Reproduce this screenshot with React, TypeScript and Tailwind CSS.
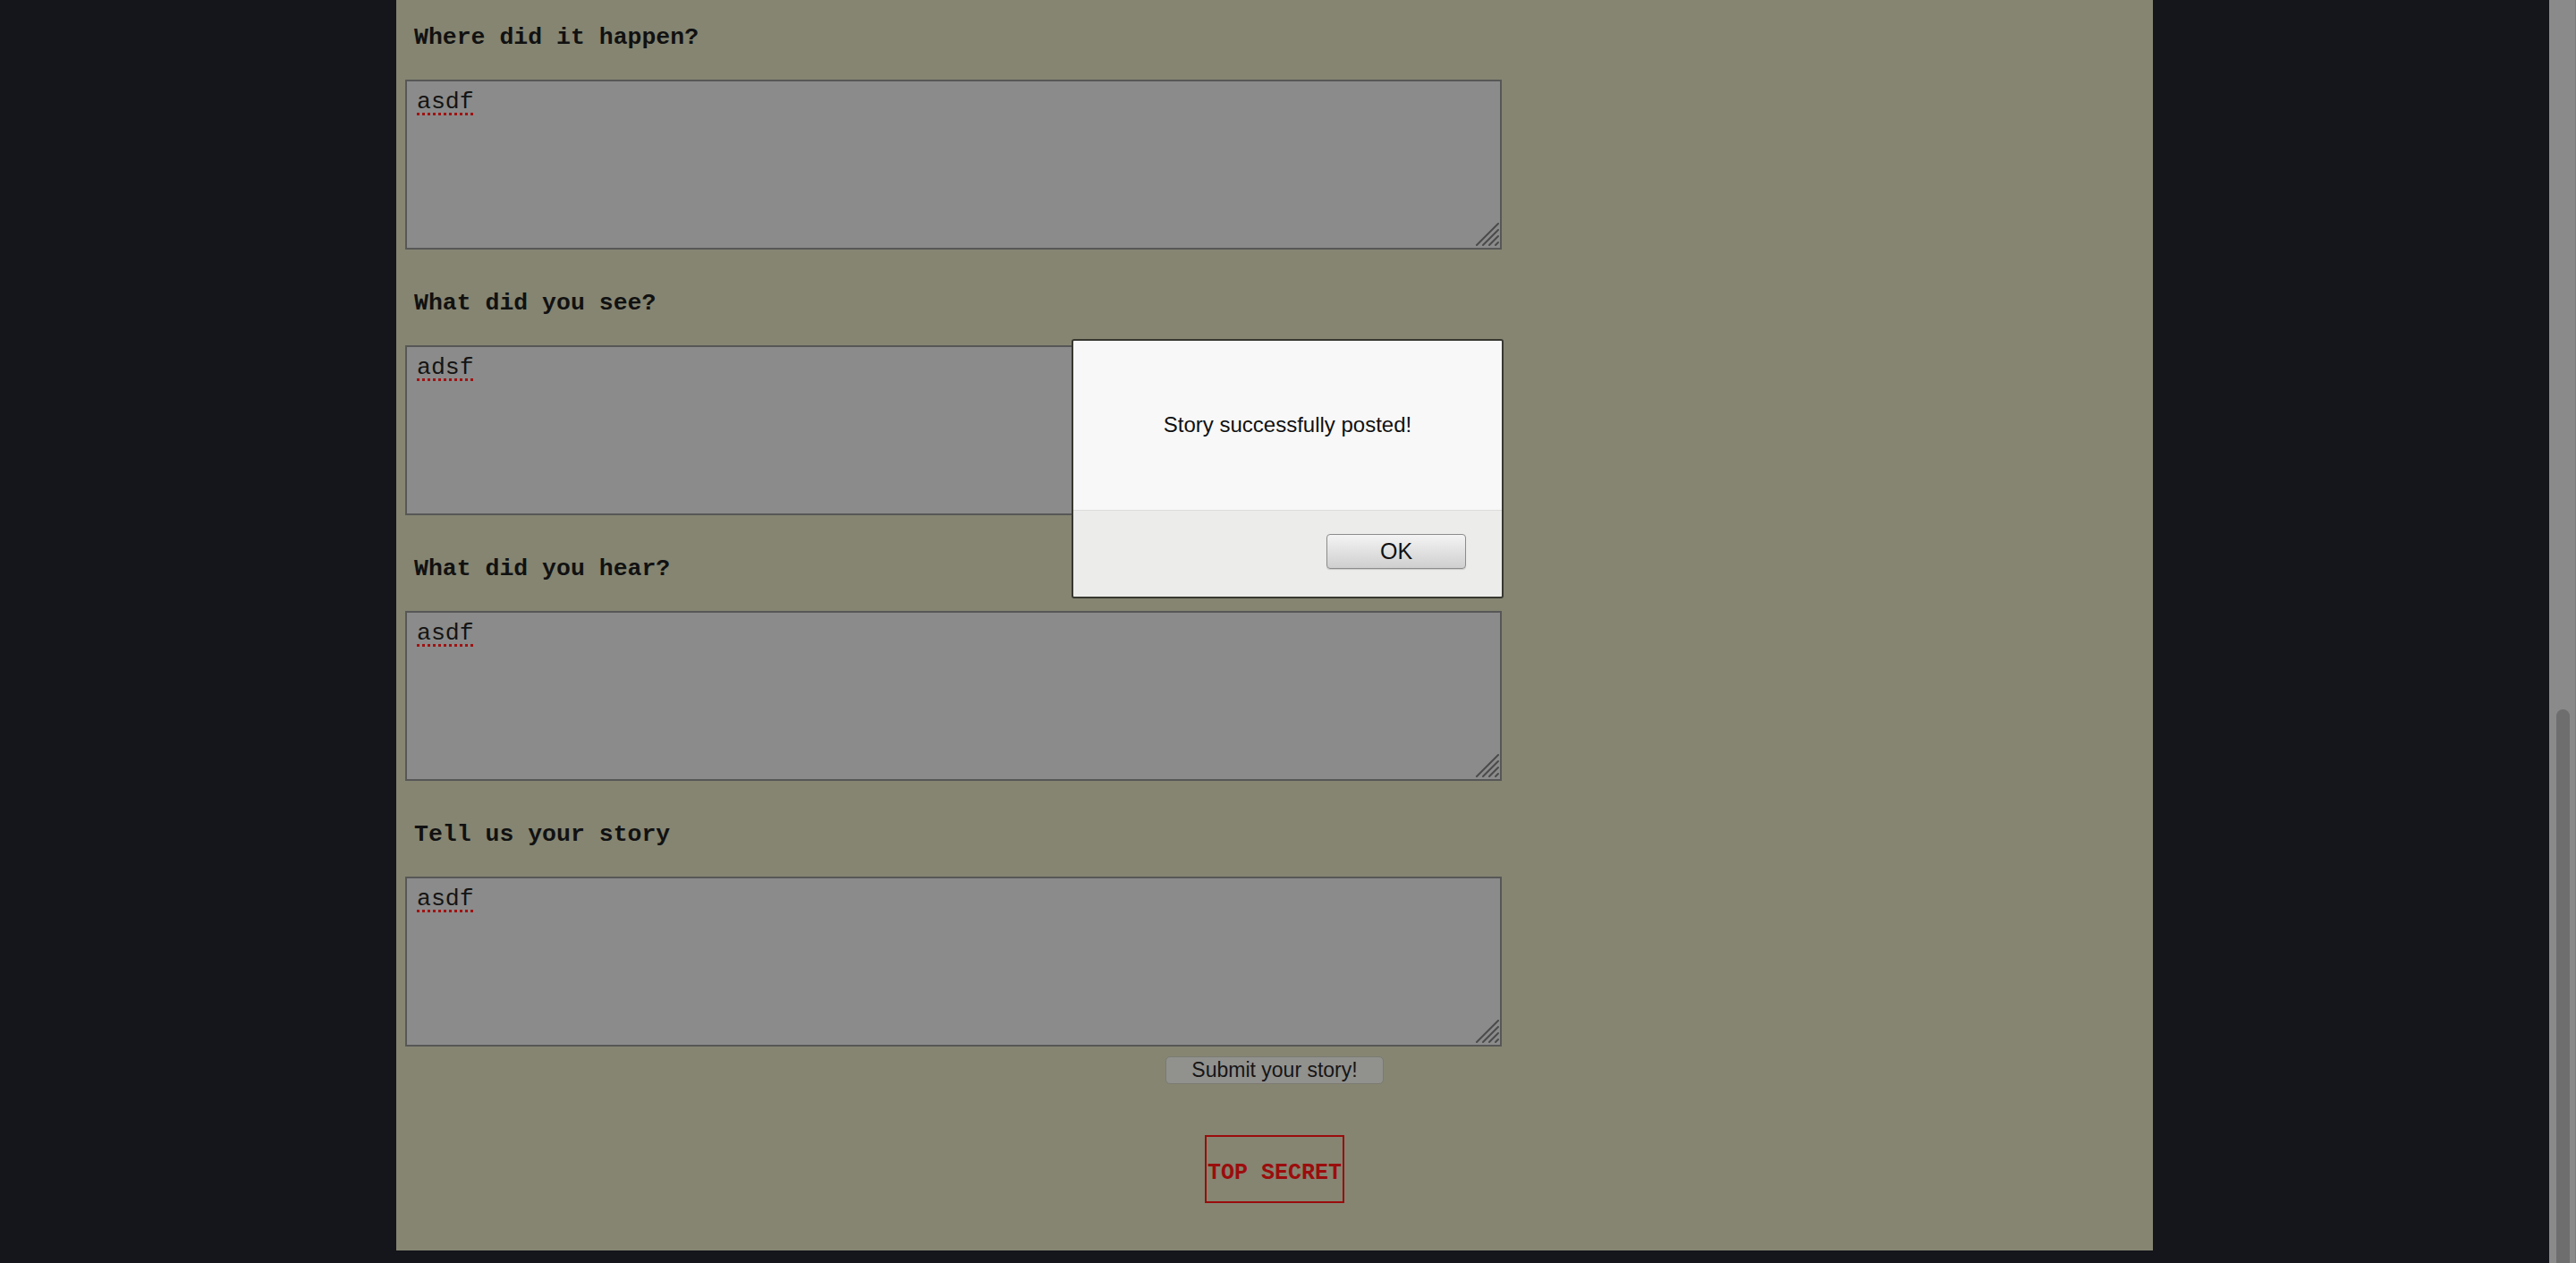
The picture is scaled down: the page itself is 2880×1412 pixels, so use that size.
const QUESTIONS = [
  { label: 'Where did it happen?', answer: 'asdf' },
  { label: 'What did you see?', answer: 'adsf' },
  { label: 'What did you hear?', answer: 'asdf' },
  { label: 'Tell us your story', answer: 'asdf' },
]

function ResizeGrip() {
  return (
    <svg className="absolute right-0 bottom-0" width="28" height="28" viewBox="0 0 28 28">
      <g stroke="#4a4a4a" strokeWidth="2" strokeLinecap="round">
        <line x1="2" y1="25" x2="26" y2="1" />
        <line x1="9" y1="25" x2="26" y2="8" />
        <line x1="16" y1="25" x2="26" y2="15" />
        <line x1="23" y1="25" x2="26" y2="22" />
      </g>
    </svg>
  )
}

function StoryField({ label, answer, first }: { label: string; answer: string; first: boolean }) {
  return (
    <div className="flex flex-col">
      <div className={(first ? 'h-[89px]' : 'h-[107px]') + ' flex flex-col justify-end pb-[31px] pl-[10px]'}>
        <h3 className="text-[26.5px] leading-[32px] font-bold text-[#111111] font-['Liberation_Mono',monospace]">
          {label}
        </h3>
      </div>
      {/* fake textarea so the spellcheck underline can be drawn */}
      <div className="relative w-[1226px] h-[190px] border-2 border-[#575757] bg-[#8b8b8b] pt-[8px] pl-[11px]">
        <span className="text-[26.5px] leading-[30px] text-[#141414] font-['Liberation_Mono',monospace] underline decoration-dotted decoration-[#a01212] decoration-[3px] underline-offset-[5px]">
          {answer}
        </span>
        <ResizeGrip />
      </div>
    </div>
  )
}

export default function App() {
  return (
    <div className="relative w-full h-[1412px] overflow-hidden flex bg-[#15161b]">
      {/* ── Page ── */}
      <div className="flex-1 pl-[443px]">
        <main className="w-[1964px] h-[1398px] bg-[#858572] flex flex-col">
          <div className="pl-[10px]">
            {QUESTIONS.map((q, i) => (
              <StoryField key={i} label={q.label} answer={q.answer} first={i === 0} />
            ))}
          </div>

          <div className="flex justify-center pt-[11px]">
            <button className="w-[244px] h-[31px] rounded-[5px] border border-[#7a7a72] bg-[#91918e] text-[23px] leading-none text-[#161616] font-['Liberation_Sans',Arial,sans-serif]">
              Submit your story!
            </button>
          </div>

          <div className="flex justify-center pt-[57px]">
            <div className="w-[156px] h-[76px] border-2 border-[#9a0c0c] flex items-center justify-center pt-[10px]">
              <span className="whitespace-nowrap text-[25px] font-bold text-[#9b0d0d] font-['Liberation_Mono',monospace]">
                TOP SECRET
              </span>
            </div>
          </div>
        </main>
      </div>

      {/* ── Scrollbar ── */}
      <div className="w-[30px] h-full bg-[#8a8a8a] flex flex-col pt-[793px] pl-[8px] pr-[6px] border-r border-[#7c7c7c]">
        <div className="flex-1 rounded-t-full bg-[#6e6e6e]" />
      </div>

      {/* ── Alert dialog ── */}
      <div className="absolute left-[1198px] top-[379px] w-[483px] h-[290px] flex flex-col rounded-[3px] border-2 border-[#383830] overflow-hidden font-['Liberation_Sans',Arial,sans-serif]">
        <div className="h-[190px] bg-[#f8f8f8] flex items-center justify-center border-b border-[#dcdcdc]">
          <p className="text-[24px] text-[#111111] pb-[2px]">Story successfully posted!</p>
        </div>
        <div className="flex-1 bg-[#ececea] flex items-start justify-end pt-[26px] pr-[40px]">
          <button className="w-[156px] h-[39px] rounded-[4px] border border-[#8c8c8c] bg-gradient-to-b from-[#f4f4f4] to-[#cfcfcf] text-[25px] leading-none text-[#111111] shadow-[0_1px_1px_rgba(0,0,0,0.15)]">
            OK
          </button>
        </div>
      </div>
    </div>
  )
}
